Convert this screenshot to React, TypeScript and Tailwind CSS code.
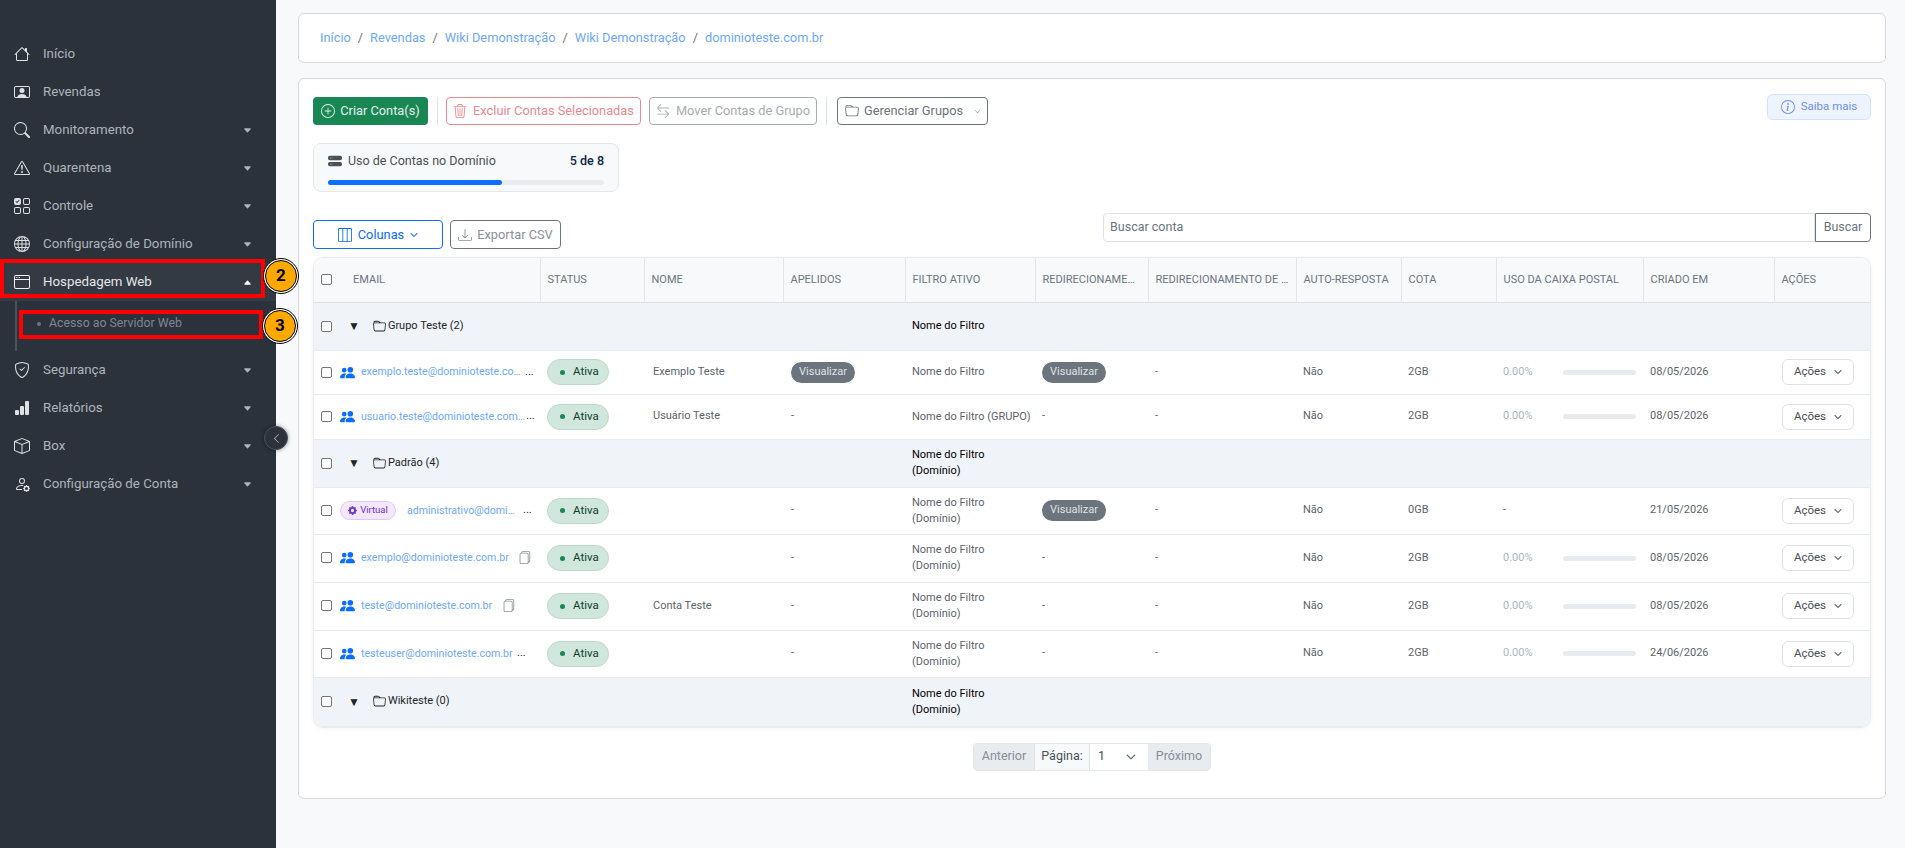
import React from "react";
import {
  BsHouse, BsPersonVideo, BsSearch, BsExclamationTriangle, BsUiChecksGrid, BsGlobe, BsWindow,
  BsShieldCheck, BsBarChartFill, BsBox, BsPersonGear, BsPlusCircle, BsTrash3, BsArrowLeftRight,
  BsFolder, BsChevronDown, BsHddStackFill, BsLayoutThreeColumns, BsDownload, BsInfoCircle,
  BsPeopleFill, BsGearFill, BsFiles, BsChevronLeft, BsCaretDownFill, BsCaretUpFill,
} from "react-icons/bs";

const F = { fontFamily: "Roboto, 'Liberation Sans', sans-serif" };

function NavItem({ icon, label, caret, active }: { icon: React.ReactNode; label: string; caret?: boolean; active?: boolean }) {
  return (
    <div className={`flex h-[38px] items-center pl-[14px] pr-[23px] text-[13.3px] ${active ? "bg-[#343a44] text-[#e3e6ea]" : "text-[#adb5bd]"}`}>
      <span className={`flex w-[29px] text-[16px] ${active ? "text-[#eef0f2]" : "text-[#dfe2e5]"}`}>{icon}</span>
      <span className="flex-1">{label}</span>
      {caret && (active ? <BsCaretUpFill className="h-[9px] w-[11px] text-white" /> : <BsCaretDownFill className="h-[9px] w-[11px] text-[#adb5bd]" />)}
    </div>
  );
}

function Sidebar() {
  return (
    <aside className="h-[848px] w-[276px] shrink-0 bg-[#2b323b] pt-[35px]">
      <NavItem icon={<BsHouse />} label="Início" />
      <NavItem icon={<BsPersonVideo />} label="Revendas" />
      <NavItem icon={<BsSearch />} label="Monitoramento" caret />
      <NavItem icon={<BsExclamationTriangle />} label="Quarentena" caret />
      <NavItem icon={<BsUiChecksGrid />} label="Controle" caret />
      <NavItem icon={<BsGlobe />} label="Configuração de Domínio" caret />
      <NavItem icon={<BsWindow />} label="Hospedagem Web" caret active />
      <div className="ml-[15px] flex h-[50px] items-center border-l-2 border-[#4a515a] pb-[5px] pl-[20px] text-[12.3px] text-[#7f8791]">
        <span className="mr-[8px] h-[4px] w-[4px] rounded-full bg-[#6c757d]" />
        Acesso ao Servidor Web
      </div>
      <NavItem icon={<BsShieldCheck />} label="Segurança" caret />
      <NavItem icon={<BsBarChartFill />} label="Relatórios" caret />
      <NavItem icon={<BsBox />} label="Box" caret />
      <NavItem icon={<BsPersonGear />} label="Configuração de Conta" caret />
    </aside>
  );
}

function Checkbox() {
  return <span className="inline-block h-[11px] w-[11px] shrink-0 rounded-[2px] border border-[#767676] bg-white" />;
}

function Status() {
  return (
    <span className="inline-flex h-[26px] w-[62px] items-center rounded-full border border-[#badbcc] bg-[#d1e7dd] pl-[12px] text-[11.5px] text-[#0f3d2a]">
      <span className="mr-[8px] h-[5px] w-[5px] rounded-full bg-[#198754]" />
      Ativa
    </span>
  );
}

function Pill() {
  return <span className="inline-flex h-[21px] w-[64px] items-center justify-center rounded-full bg-[#6c757d] text-[11px] text-[#dee2e6]">Visualizar</span>;
}

function Acoes() {
  return (
    <span className="inline-flex h-[26px] w-[72px] items-center justify-center gap-[8px] rounded-[6px] border border-[#dee2e6] bg-white text-[11.5px] text-[#495057]">
      Ações <BsChevronDown className="h-[8px] w-[8px] stroke-1" />
    </span>
  );
}

function Usage() {
  return (
    <div className="flex items-center">
      <span className="w-[60px] text-[#adb5bd]">0.00%</span>
      <span className="h-[5px] w-[74px] rounded-full bg-[#e9ecef]" />
    </div>
  );
}

type Row = {
  h: string; email: string; kind: "cut" | "copy" | "virtual"; w?: string; cut?: string; nome: string; apelido?: boolean; filtro: React.ReactNode;
  redir?: boolean; cota: string; uso: boolean; data: string;
};

const LN = <>Nome do Filtro<br />(Domínio)</>;

function DataRow({ r }: { r: Row }) {
  return (
    <tr className={`${r.h} border-b border-[#e9ecef] bg-white text-[11px] text-[#5c636a]`}>
      <td className="pl-[7px]">
        <div className="flex items-center">
          <Checkbox />
          {r.kind === "virtual" ? (
            <span className="ml-[8px] flex h-[19px] w-[56px] shrink-0 items-center justify-center gap-[3px] rounded-full border border-[#dfc7fb] bg-[#f3e8ff] text-[9.5px] text-[#6f2fd6]">
              <BsGearFill className="h-[9px] w-[9px]" /> Virtual
            </span>
          ) : (
            <BsPeopleFill className="ml-[8px] h-[15px] w-[15px] shrink-0 text-[#0d6efd]" />
          )}
          <span className={`${r.kind === "virtual" ? "ml-[11px]" : "ml-[6px]"} ${r.w} truncate text-[10.6px] text-[#6ea8fe]`}>{r.email}</span>
          {r.kind === "copy" ? (
            <BsFiles className={`${r.cut} h-[13px] w-[13px] shrink-0 text-[#868e96]`} />
          ) : (
            <span className={`${r.cut} text-[#212529]`}>...</span>
          )}
        </div>
      </td>
      <td className="pl-[7px]"><Status /></td>
      <td className="px-[9px]">{r.nome}</td>
      <td className="px-[8px]">{r.apelido ? <Pill /> : "-"}</td>
      <td className="px-[7px] leading-[16px] whitespace-nowrap">{r.filtro}</td>
      <td className="px-[7px]">{r.redir ? <Pill /> : "-"}</td>
      <td className="px-[7px]">-</td>
      <td className="px-[7px]">Não</td>
      <td className="px-[7px]">{r.cota}</td>
      <td className="px-[7px]">{r.uso ? <Usage /> : "-"}</td>
      <td className="px-[7px]">{r.data}</td>
      <td className="pl-[8px]"><Acoes /></td>
    </tr>
  );
}

function GroupRow({ h, name, filtro }: { h: string; name: string; filtro: React.ReactNode }) {
  return (
    <tr className={`${h} border-b border-[#e9ecef] bg-[#f0f3f8] text-[11px] text-[#212529]`}>
      <td className="pl-[7px]">
        <div className="flex items-center">
          <Checkbox />
          <span className="ml-[16px] text-[12px] leading-none text-[#212529]">▼</span>
          <BsFolder className="ml-[13px] h-[13px] w-[13px]" />
          <span className="ml-[2px] text-[#212529]">{name}</span>
        </div>
      </td>
      <td /><td /><td />
      <td className="px-[7px] leading-[16px] text-[#000000]">{filtro}</td>
      <td colSpan={7} />
    </tr>
  );
}

const headers: [string, string][] = [
  ["STATUS", "w-[104px]"], ["NOME", "w-[139px]"], ["APELIDOS", "w-[122px]"], ["FILTRO ATIVO", "w-[130px]"],
  ["REDIRECIONAMENTO", "w-[113px]"], ["REDIRECIONAMENTO DE ENCAMINHAMENTO", "w-[148px]"], ["AUTO-RESPOSTA", "w-[105px]"],
  ["COTA", "w-[95px]"], ["USO DA CAIXA POSTAL", "w-[147px]"], ["CRIADO EM", "w-[131px]"], ["AÇÕES", "w-[96px]"],
];

function Table() {
  return (
    <div className="overflow-hidden rounded-[10px] border border-[#e9ecef] shadow-[0_1px_4px_rgba(0,0,0,0.05)]">
      <table className="w-full table-fixed border-collapse">
        <colgroup>
          <col className="w-[226px]" />
          {headers.map(([h, w]) => <col key={h} className={w} />)}
        </colgroup>
        <thead>
          <tr className="h-[44px] border-b border-[#dee2e6] bg-[#f8f9fa] text-left text-[11px] font-normal text-[#6c757d]">
            <th className="border-r border-[#e2e5e9] pl-[7px] font-normal">
              <div className="flex items-center">
                <Checkbox />
                <span className="ml-[21px]">EMAIL</span>
              </div>
            </th>
            {headers.map(([h]) => (
              <th key={h} className="truncate border-r border-[#e2e5e9] px-[7px] pt-[1px] font-normal last:border-r-0">{h}</th>
            ))}
          </tr>
        </thead>
        <tbody>
          <GroupRow h="h-[48px]" name="Grupo Teste (2)" filtro="Nome do Filtro" />
          <DataRow r={{ h: "h-[44px]", email: "exemplo.teste@dominioteste.com.br", kind: "cut", w: "w-[160px]", cut: "ml-[4px]", nome: "Exemplo Teste", apelido: true, filtro: "Nome do Filtro", redir: true, cota: "2GB", uso: true, data: "08/05/2026" }} />
          <DataRow r={{ h: "h-[45px]", email: "usuario.teste@dominioteste.com.br", kind: "cut", w: "w-[164px]", cut: "ml-[1px]", nome: "Usuário Teste", filtro: "Nome do Filtro (GRUPO)", cota: "2GB", uso: true, data: "08/05/2026" }} />
          <GroupRow h="h-[48px]" name="Padrão (4)" filtro={LN} />
          <DataRow r={{ h: "h-[47px]", email: "administrativo@dominioteste.com.br", kind: "virtual", w: "w-[112px]", cut: "ml-[4px]", nome: "", filtro: LN, redir: true, cota: "0GB", uso: false, data: "21/05/2026" }} />
          <DataRow r={{ h: "h-[48px]", email: "exemplo@dominioteste.com.br", kind: "copy", w: "w-[148px]", cut: "ml-[9px]", nome: "", filtro: LN, cota: "2GB", uso: true, data: "08/05/2026" }} />
          <DataRow r={{ h: "h-[48px]", email: "teste@dominioteste.com.br", kind: "copy", w: "w-[132px]", cut: "ml-[9px]", nome: "Conta Teste", filtro: LN, cota: "2GB", uso: true, data: "08/05/2026" }} />
          <DataRow r={{ h: "h-[47px]", email: "testeuser@dominioteste.com.br", kind: "cut", w: "w-[155px]", cut: "ml-[1px]", nome: "", filtro: LN, cota: "2GB", uso: true, data: "24/06/2026" }} />
          <GroupRow h="h-[49px]" name="Wikiteste (0)" filtro={LN} />
        </tbody>
      </table>
    </div>
  );
}

function Annotation({ n, cls }: { n: string; cls: string }) {
  return (
    <div className={`absolute flex h-[36px] w-[36px] items-center justify-center rounded-full border border-black bg-white ${cls}`}>
      <div className="flex h-[32px] w-[32px] items-center justify-center rounded-full border border-black bg-[#ffa800] text-[17px] font-bold text-black">{n}</div>
    </div>
  );
}

export default function App() {
  return (
    <div className="relative flex h-[848px] w-full overflow-hidden bg-[#f8f9fb]" style={F}>
      <Sidebar />
      <main className="min-w-0 flex-1 pl-[22px] pr-[19px] pt-[13px]">
        <div className="flex h-[50px] items-center rounded-[6px] border border-[#d6d9dc] bg-white pl-[21px] text-[12.8px] text-[#6ea8fe]">
          <span>Início</span><span className="mx-[7px] text-[#6c757d]">/</span>
          <span>Revendas</span><span className="mx-[7px] text-[#6c757d]">/</span>
          <span>Wiki Demonstração</span><span className="mx-[7px] text-[#6c757d]">/</span>
          <span>Wiki Demonstração</span><span className="mx-[7px] text-[#6c757d]">/</span>
          <span>dominioteste.com.br</span>
        </div>

        <div className="mt-[15px] h-[721px] rounded-[6px] border border-[#d6d9dc] bg-white px-[14px] pt-[18px]">
          <div className="flex items-start justify-between">
            <div className="flex h-[28px] items-center text-[12.8px]">
              <span className="flex h-[28px] w-[115px] items-center justify-center gap-[5px] rounded-[4px] bg-[#198754] text-[#e4f1ea]">
                <BsPlusCircle className="h-[14px] w-[14px]" /> Criar Conta(s)
              </span>
              <span className="ml-[9px] mr-[8px] h-[28px] w-px bg-[#dee2e6]" />
              <span className="flex h-[28px] w-[195px] items-center justify-center gap-[6px] rounded-[4px] border border-[#e98a93] text-[#e98a93]">
                <BsTrash3 className="h-[14px] w-[14px]" /> Excluir Contas Selecionadas
              </span>
              <span className="ml-[8px] flex h-[28px] w-[168px] items-center justify-center gap-[6px] rounded-[4px] border border-[#a7acb1] text-[#a7acb1]">
                <BsArrowLeftRight className="h-[14px] w-[14px]" /> Mover Contas de Grupo
              </span>
              <span className="ml-[9px] mr-[10px] h-[28px] w-px bg-[#dee2e6]" />
              <span className="flex h-[28px] w-[151px] items-center rounded-[4px] border border-[#6c757d] pl-[7px] text-[#6c757d]">
                <BsFolder className="mr-[5px] h-[14px] w-[14px]" /> Gerenciar Grupos
                <BsChevronDown className="ml-auto mr-[6px] h-[7px] w-[7px]" />
              </span>
            </div>
            <span className="mt-[-3px] flex h-[26px] w-[104px] items-center justify-center gap-[6px] rounded-[6px] border border-[#cfe2ff] bg-[#edf4ff] text-[11.5px] text-[#6f8fe8]">
              <BsInfoCircle className="h-[14px] w-[14px]" /> Saiba mais
            </span>
          </div>

          <div className="mt-[18px] h-[49px] w-[306px] rounded-[8px] border border-[#e3e6ea] bg-[#f8f9fa] px-[14px] pt-[9px]">
            <div className="flex items-center justify-between text-[12.5px] leading-[16px]">
              <span className="flex items-center gap-[6px] text-[#495057]"><BsHddStackFill className="h-[14px] w-[14px]" /> Uso de Contas no Domínio</span>
              <span className="font-medium text-[#0b2447]">5 de 8</span>
            </div>
            <div className="mt-[11px] h-[5px] w-full rounded-full bg-[#e9ecef]">
              <div className="h-[5px] w-[63%] rounded-full bg-[#0d6efd]" />
            </div>
          </div>

          <div className="mt-[21px] flex items-start justify-between">
            <div className="mt-[7px] flex text-[12.8px]">
              <span className="flex h-[29px] w-[130px] items-center justify-center gap-[6px] rounded-[4px] border border-[#0d6efd] text-[#0d6efd]">
                <BsLayoutThreeColumns className="h-[14px] w-[14px]" /> Colunas <BsChevronDown className="h-[8px] w-[8px] stroke-1" />
              </span>
              <span className="ml-[7px] flex h-[29px] w-[111px] items-center justify-center gap-[5px] rounded-[4px] border border-[#6c757d] text-[#8a9097]">
                <BsDownload className="h-[14px] w-[14px]" /> Exportar CSV
              </span>
            </div>
            <div className="flex h-[29px] w-[768px] text-[12.5px]">
              <span className="flex flex-1 items-center rounded-l-[4px] border border-[#dee2e6] pl-[6px] text-[#6c757d]">Buscar conta</span>
              <span className="flex w-[56px] items-center justify-center rounded-r-[4px] border border-[#6c757d] text-[#6c757d]">Buscar</span>
            </div>
          </div>

          <div className="mt-[8px]"><Table /></div>

          <div className="mt-[15px] flex justify-center">
            <div className="flex h-[28px] overflow-hidden rounded-[4px] border border-[#e3e6ea] text-[12.5px]">
              <span className="flex w-[60px] items-center justify-center bg-[#e9ecef] text-[#868e96]">Anterior</span>
              <span className="flex w-[56px] items-center justify-center border-x border-[#dee2e6] bg-[#f8f9fa] text-[#495057]">Página:</span>
              <span className="flex w-[58px] items-center justify-between bg-white pl-[8px] pr-[12px] text-[#495057]">1 <BsChevronDown className="h-[10px] w-[10px] stroke-1" /></span>
              <span className="flex w-[62px] items-center justify-center bg-[#e9ecef] text-[#868e96]">Próximo</span>
            </div>
          </div>
        </div>
      </main>

      <div className="absolute left-[264px] top-[426px] flex h-[24px] w-[24px] items-center justify-center rounded-full border border-[#4a515a] bg-[#2b323b] text-[#c9ced3] shadow-[0_0_4px_rgba(0,0,0,0.4)]">
        <BsChevronLeft className="h-[11px] w-[11px]" />
      </div>
      <div className="absolute left-0 top-[259px] h-[39px] w-[265px] border-4 border-[#ff0000]" />
      <div className="absolute left-[19px] top-[310px] h-[29px] w-[244px] border-4 border-[#ff0000]" />
      <Annotation n="2" cls="left-[263px] top-[258px]" />
      <Annotation n="3" cls="left-[262px] top-[308px]" />
    </div>
  );
}
